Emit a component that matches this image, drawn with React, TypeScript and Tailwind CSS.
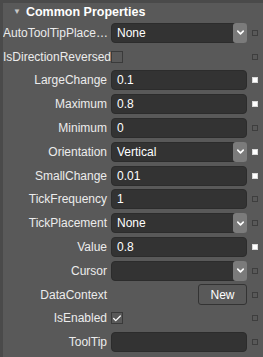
import { Check, ChevronDown } from "lucide-react";

type Row =
  | { label: string; kind: "select"; value: string; set?: boolean }
  | { label: string; kind: "text"; value: string; set?: boolean }
  | { label: string; kind: "check"; checked: boolean; set?: boolean }
  | { label: string; kind: "button"; value: string; set?: boolean };

const rows: Row[] = [
  { label: "AutoToolTipPlace…", kind: "select", value: "None" },
  { label: "IsDirectionReversed", kind: "check", checked: false },
  { label: "LargeChange", kind: "text", value: "0.1", set: true },
  { label: "Maximum", kind: "text", value: "0.8", set: true },
  { label: "Minimum", kind: "text", value: "0" },
  { label: "Orientation", kind: "select", value: "Vertical", set: true },
  { label: "SmallChange", kind: "text", value: "0.01", set: true },
  { label: "TickFrequency", kind: "text", value: "1" },
  { label: "TickPlacement", kind: "select", value: "None" },
  { label: "Value", kind: "text", value: "0.8", set: true },
  { label: "Cursor", kind: "select", value: "" },
  { label: "DataContext", kind: "button", value: "New" },
  { label: "IsEnabled", kind: "check", checked: true },
  { label: "ToolTip", kind: "text", value: "" },
];

function Marker({ set }: { set?: boolean }) {
  return (
    <div
      className={
        set
          ? "w-[6px] h-[6px] bg-white border border-[#d8d8d8]"
          : "w-[6px] h-[6px] border border-[#3e3e3e]"
      }
    />
  );
}

function Editor({ row }: { row: Row }) {
  if (row.kind === "check") {
    return (
      <div className="w-[12px] h-[12px] border border-[#3a3a3a] flex items-center justify-center">
        {row.checked && <Check size={11} strokeWidth={3} className="text-white" />}
      </div>
    );
  }
  if (row.kind === "button") {
    return (
      <div className="ml-auto w-[49px] h-[21px] rounded-[3px] border border-[#333] flex items-center justify-center text-white text-[12px]">
        {row.value}
      </div>
    );
  }
  return (
    <div className="flex-1 h-[20px] rounded-[4px] bg-[#333333] border border-[#2c2c2c] flex items-center pl-[5px] text-white text-[12px]">
      <span className="flex-1">{row.value}</span>
      {row.kind === "select" && (
        <div className="w-[14px] h-[20px] -mr-px rounded-[3px] bg-[#7b7b7b] flex items-center justify-center">
          <ChevronDown size={11} strokeWidth={3.5} className="text-white" />
        </div>
      )}
    </div>
  );
}

export default function App() {
  return (
    <div
      className="w-[263px] h-[357px] bg-[#595959] border-l-[3px] border-t-[3px] border-[#4a4a4a] overflow-hidden"
      style={{ fontFamily: '"Liberation Sans", Arial, sans-serif' }}
    >
      <div className="flex items-center h-[18px] pl-[10px] gap-[5px]">
        <span className="text-[#c8c8c8] text-[8px] leading-none">▼</span>
        <span className="text-white text-[12.5px] font-bold">Common Properties</span>
      </div>
      <div className="flex flex-col">
        {rows.map((r) => (
          <div key={r.label} className="flex items-center h-[23.8px]">
            <div className="w-[108px] pr-[4px] text-right text-[12px] text-[#ececec] whitespace-nowrap">
              {r.label}
            </div>
            <div className="w-[136px] flex items-center">
              <Editor row={r} />
            </div>
            <div className="w-[16px] flex items-center justify-center">
              <Marker set={r.set} />
            </div>
          </div>
        ))}
      </div>
    </div>
  );
}
